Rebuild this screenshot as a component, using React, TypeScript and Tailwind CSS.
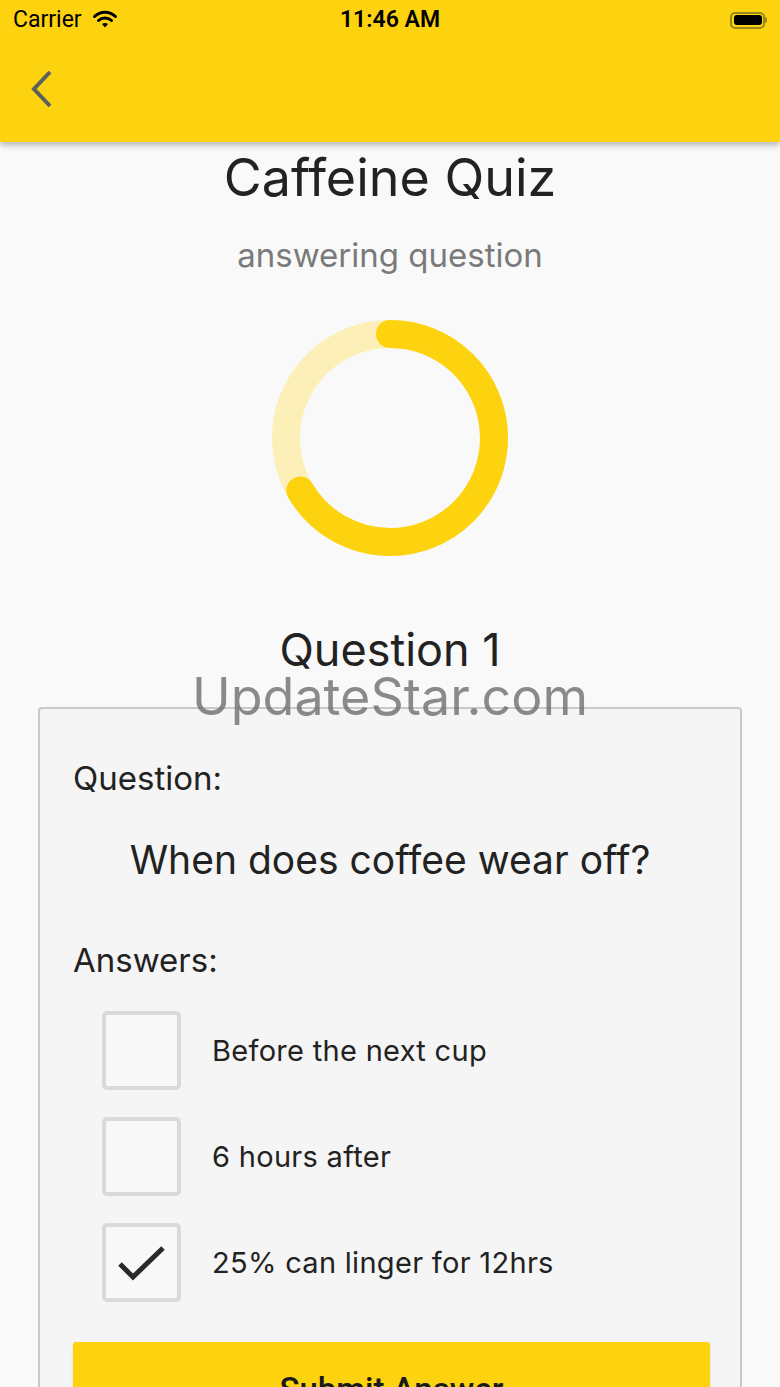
import { useState } from 'react'

const answers = ['Before the next cup', '6 hours after', '25% can linger for 12hrs']

function ProgressRing({ progress }: { progress: number }) {
  const r = 104
  const c = 2 * Math.PI * r
  return (
    <svg width="240" height="240" viewBox="0 0 240 240">
      <circle cx="120" cy="120" r={r} fill="none" stroke="#FCF0B8" strokeWidth="28" />
      <circle
        cx="120"
        cy="120"
        r={r}
        fill="none"
        stroke="#FDD20E"
        strokeWidth="28"
        strokeLinecap="round"
        strokeDasharray={`${c * progress} ${c}`}
        transform="rotate(-90 120 120)"
      />
    </svg>
  )
}

export default function App() {
  const [selected, setSelected] = useState<number[]>([2])

  const toggle = (i: number) => {
    setSelected(prev => (prev.includes(i) ? prev.filter(x => x !== i) : [...prev, i]))
  }

  return (
    <div
      className="w-[780px] h-[1387px] overflow-hidden bg-[#F9F9F9] text-[#222]"
      style={{ fontFamily: 'Inter, "Noto Sans", sans-serif' }}
    >
      {/* app bar */}
      <header className="relative z-10 h-[142px] bg-[#FDD30F] shadow-[0_3px_6px_rgba(0,0,0,0.28)]">
        <div
          className="h-[40px] px-[13px] flex items-center justify-between text-[23px] text-black"
          style={{ fontFamily: 'Roboto, sans-serif' }}
        >
          <div className="flex items-center gap-[10px] w-[160px]">
            <span>Carrier</span>
            <svg width="26" height="20" viewBox="0 0 26 20">
              <path d="M13 17.5 L10 14 A5 5 0 0 1 16 14 Z" fill="#000" />
              <path d="M6.5 10.5 A9.5 9.5 0 0 1 19.5 10.5" stroke="#000" strokeWidth="3" fill="none" strokeLinecap="round" />
              <path d="M2.5 6.5 A15 15 0 0 1 23.5 6.5" stroke="#000" strokeWidth="3" fill="none" strokeLinecap="round" />
            </svg>
          </div>
          <span className="font-semibold">11:46 AM</span>
          <div className="w-[160px] flex justify-end">
            <div className="flex items-center">
              <div className="w-[35px] h-[17px] rounded-[5px] border-2 border-[#9a8a20] p-[1.5px]">
                <div className="w-full h-full rounded-[3px] bg-black" />
              </div>
              <div className="w-[2px] h-[6px] bg-[#9a8a20] rounded-r" />
            </div>
          </div>
        </div>
        <div className="h-[102px] flex items-center pl-[28px] pb-[4px]">
          <svg width="28" height="40" viewBox="0 0 28 40">
            <path d="M22 3 L6 20 L22 37" stroke="#5e5e5e" strokeWidth="4" fill="none" />
          </svg>
        </div>
      </header>

      <main className="flex flex-col items-center">
        <h1 className="mt-[6px] text-[52px] leading-[60px]">Caffeine Quiz</h1>
        <p className="mt-[27px] text-[33px] leading-[40px] text-[#7a7a7a]">answering question</p>

        <div className="mt-[43px]">
          <ProgressRing progress={0.665} />
        </div>

        <div className="relative mt-[66px] flex flex-col items-center w-full">
          <h2 className="text-[45px] leading-[52px]">Question 1</h2>
          <span className="absolute top-[42px] text-[52px] leading-[62px] text-[#6e6e6e]/80 z-10 pointer-events-none">
            UpdateStar.com
          </span>
        </div>

        <section className="mt-[31px] w-[704px] rounded-[4px] border-2 border-[#C9C9C9] bg-[#F5F5F5] px-[33px] pt-[49px] pb-[40px]">
          <p className="text-[33px] leading-[40px]">Question:</p>
          <p className="mt-[39px] text-center text-[39px] leading-[46px]">When does coffee wear off?</p>
          <p className="mt-[57px] text-[33px] leading-[40px]">Answers:</p>

          <ul className="mt-[31px] pl-[29px] flex flex-col gap-[27px]">
            {answers.map((a, i) => (
              <li key={a} className="flex items-center gap-[31px] cursor-pointer" onClick={() => toggle(i)}>
                <div className="w-[79px] h-[79px] rounded-[5px] border-[4px] border-[#DADADA] bg-[#F8F8F8] flex items-center justify-center">
                  {selected.includes(i) && (
                    <svg width="52" height="40" viewBox="0 0 52 40">
                      <path d="M4 21 L17 34 L47 5" stroke="#2a2a2a" strokeWidth="5" fill="none" />
                    </svg>
                  )}
                </div>
                <span className="text-[29px] leading-[36px] text-[#222] tracking-[0.3px]">{a}</span>
              </li>
            ))}
          </ul>

          <button
            className="mt-[40px] w-[637px] h-[96px] rounded-[3px] bg-[#FDD30F] text-[33px] font-medium text-[#1a1a1a] shadow-sm"
            style={{ fontFamily: 'Roboto, sans-serif' }}
          >
            Submit Answer
          </button>
        </section>
      </main>
    </div>
  )
}
